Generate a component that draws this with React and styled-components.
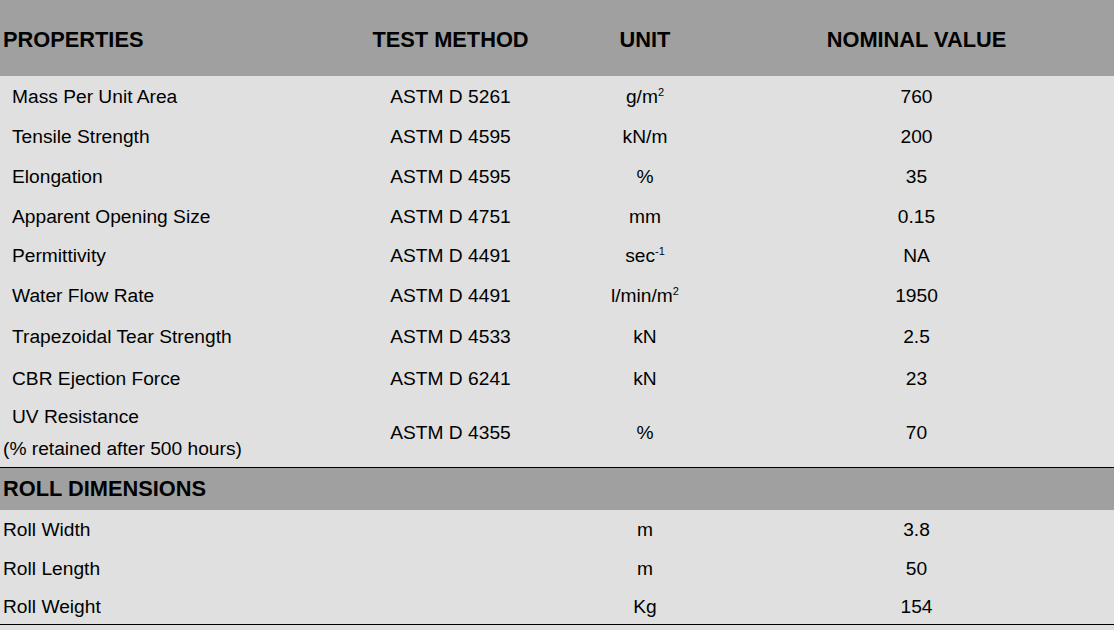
import React from "react"
import styled, { createGlobalStyle } from "styled-components"

const GlobalStyle = createGlobalStyle`
  html, body {
    margin: 0;
    padding: 0;
    background: #e0e0e0;
    font-family: "Liberation Sans", Arial, sans-serif;
    color: #000;
  }
`

const properties = [
  { name: "Mass Per Unit Area", method: "ASTM D 5261", unit: <>g/m<sup>2</sup></>, value: "760", h: 40 },
  { name: "Tensile Strength", method: "ASTM D 4595", unit: "kN/m", value: "200", h: 40 },
  { name: "Elongation", method: "ASTM D 4595", unit: "%", value: "35", h: 41 },
  { name: "Apparent Opening Size", method: "ASTM D 4751", unit: "mm", value: "0.15", h: 38 },
  { name: "Permittivity", method: "ASTM D 4491", unit: <>sec<sup>-1</sup></>, value: "NA", h: 40 },
  { name: "Water Flow Rate", method: "ASTM D 4491", unit: <>l/min/m<sup>2</sup></>, value: "1950", h: 40 },
  { name: "Trapezoidal Tear Strength", method: "ASTM D 4533", unit: "kN", value: "2.5", h: 42 },
  { name: "CBR Ejection Force", method: "ASTM D 6241", unit: "kN", value: "23", h: 43 },
]

const rollRows = [
  { name: "Roll Width", unit: "m", value: "3.8", h: 38 },
  { name: "Roll Length", unit: "m", value: "50", h: 40 },
  { name: "Roll Weight", unit: "Kg", value: "154", h: 37 },
]

const App = () => {
  return (
    <>
      <GlobalStyle />
      <Table>
        <HeadRow>
          <HeadCell left>PROPERTIES</HeadCell>
          <HeadCell>TEST METHOD</HeadCell>
          <HeadCell>UNIT</HeadCell>
          <HeadCell>NOMINAL VALUE</HeadCell>
          <span />
        </HeadRow>

        {properties.map((p) => (
          <Row key={p.name} h={p.h}>
            <Cell indent>{p.name}</Cell>
            <Cell center>{p.method}</Cell>
            <Cell center>{p.unit}</Cell>
            <Cell center>{p.value}</Cell>
            <span />
          </Row>
        ))}

        <Row h={68} ruled lift={4}>
          <TwoLine>
            <FirstLine>UV Resistance</FirstLine>
            <span>(% retained after 500 hours)</span>
          </TwoLine>
          <Cell center>ASTM D 4355</Cell>
          <Cell center>%</Cell>
          <Cell center>70</Cell>
          <span />
        </Row>

        <SectionBand>ROLL DIMENSIONS</SectionBand>

        {rollRows.map((r, i) => (
          <Row key={r.name} h={r.h} ruled={i === rollRows.length - 1}>
            <Cell>{r.name}</Cell>
            <Cell center />
            <Cell center>{r.unit}</Cell>
            <Cell center>{r.value}</Cell>
            <span />
          </Row>
        ))}
      </Table>
    </>
  )
}

export default App

const columns = "360px 181px 208px 335px 1fr"

const Table = styled.div`
  display: flex;
  flex-direction: column;
  width: 100%;
  min-height: 630px;
  background: #e0e0e0;
`

const HeadRow = styled.div`
  display: grid;
  grid-template-columns: ${columns};
  align-items: center;
  height: 76px;
  padding-top: 4px;
  box-sizing: border-box;
  background: #a0a0a0;
`

const HeadCell = styled.div`
  font-size: 21.8px;
  font-weight: bold;
  text-align: ${(props) => (props.left ? "left" : "center")};
  padding-left: ${(props) => (props.left ? "3px" : "0")};
  white-space: nowrap;
`

const Row = styled.div`
  display: grid;
  grid-template-columns: ${columns};
  align-items: center;
  height: ${(props) => props.h}px;
  padding-top: 1px;
  padding-bottom: ${(props) => props.lift || 0}px;
  box-sizing: border-box;
  border-bottom: ${(props) => (props.ruled ? "1px solid #000" : "none")};
  font-size: 19.2px;

  sup {
    font-size: 11px;
    vertical-align: 7px;
    line-height: 0;
  }
`

const Cell = styled.div`
  text-align: ${(props) => (props.center ? "center" : "left")};
  padding-left: ${(props) => (props.center ? "0" : props.indent ? "12px" : "3px")};
  white-space: nowrap;
`

const TwoLine = styled.div`
  display: flex;
  flex-direction: column;
  padding-left: 3px;
  line-height: 32px;
  white-space: nowrap;
`

const FirstLine = styled.span`
  padding-left: 9px;
`

const SectionBand = styled.div`
  display: flex;
  align-items: center;
  height: 42px;
  padding-left: 3px;
  background: #a0a0a0;
  font-size: 21.8px;
  font-weight: bold;
`
